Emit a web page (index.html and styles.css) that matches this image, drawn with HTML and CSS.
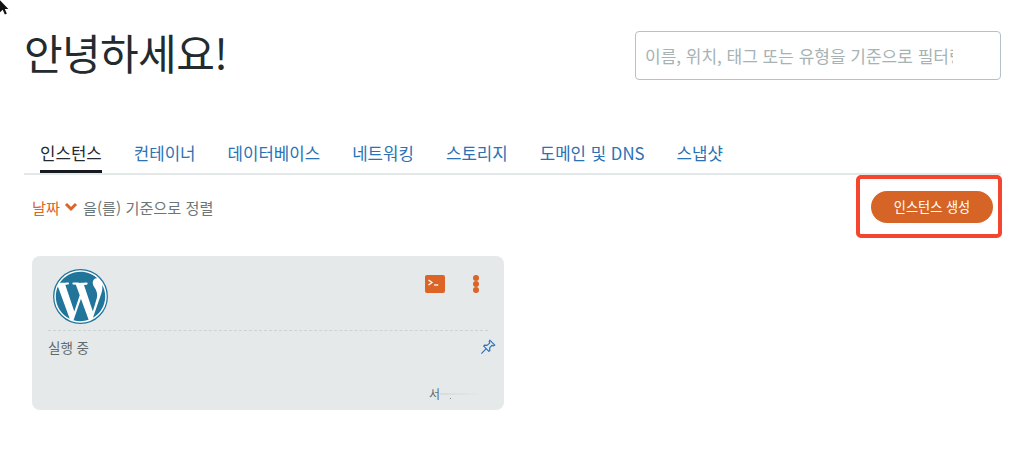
FILE: index.html
```html
<!DOCTYPE html>
<html lang="ko">
<head>
    <meta charset="utf-8">
    <title>안녕하세요!</title>
    <link rel="stylesheet" href="styles.css">
</head>
<body>

    <svg class="cursor" width="11" height="17" viewBox="0 0 10 15">
        <path d="M0 0 L0 11 L2.5 8.6 L4.4 13 L6.2 12.2 L4.4 8 L7.6 8 Z" fill="#111"/>
    </svg>

    <div class="page">
        <div class="top-row">
            <h1>안녕하세요!</h1>
            <input type="text" class="search" placeholder="이름, 위치, 태그 또는 유형을 기준으로 필터링">
        </div>

        <div class="tabs">
            <a class="tab active">인스턴스</a>
            <a class="tab">컨테이너</a>
            <a class="tab">데이터베이스</a>
            <a class="tab">네트워킹</a>
            <a class="tab">스토리지</a>
            <a class="tab">도메인 및 DNS</a>
            <a class="tab">스냅샷</a>
        </div>

        <div class="toolbar">
            <div class="sort">
                <span class="sort-key">날짜</span>
                <svg class="chevron" width="14" height="10" viewBox="0 0 14 10">
                    <path d="M2 2 L7 7 L12 2" fill="none" stroke="#dc6426" stroke-width="3"/>
                </svg>
                <span>을(를) 기준으로 정렬</span>
            </div>
            <div class="highlight">
                <button type="button" class="btn">인스턴스 생성</button>
            </div>
        </div>

        <div class="card">
            <div class="card-top">
                <svg class="wp-logo" width="55" height="55" viewBox="0 0 24 24">
                    <circle cx="12" cy="12" r="11.7" fill="#fff" stroke="#21759b" stroke-width=".55"/>
                    <circle cx="12" cy="12" r="10.75" fill="#fff"/>
                    <path fill="#21759b" d="M21.469 6.825c.84 1.537 1.318 3.3 1.318 5.175 0 3.979-2.156 7.456-5.363 9.325l3.295-9.527c.615-1.54.82-2.771.82-3.864 0-.405-.026-.78-.07-1.11m-7.981.105c.647-.03 1.232-.105 1.232-.105.582-.075.514-.93-.067-.899 0 0-1.755.135-2.88.135-1.064 0-2.85-.15-2.85-.15-.585-.03-.661.855-.075.885 0 0 .54.061 1.125.09l1.68 4.605-2.37 7.08L5.354 6.9c.649-.03 1.234-.1 1.234-.1.585-.075.516-.93-.065-.896 0 0-1.746.138-2.874.138-.2 0-.438-.008-.69-.015C4.911 3.15 8.235 1.215 12 1.215c2.809 0 5.365 1.072 7.286 2.833-.046-.003-.091-.009-.141-.009-1.06 0-1.812.923-1.812 1.914 0 .89.513 1.643 1.06 2.531.411.72.89 1.643.89 2.977 0 .915-.354 1.994-.821 3.479l-1.075 3.585-3.9-11.61.001.014zM12 22.784c-1.059 0-2.081-.153-3.048-.437l3.237-9.406 3.315 9.087c.024.053.05.101.078.149-1.12.393-2.325.609-3.582.609M1.211 12c0-1.564.336-3.05.935-4.39L7.29 21.709C3.694 19.96 1.212 16.271 1.211 12"/>
                </svg>
                <div class="card-actions">
                    <svg class="terminal" width="20" height="18" viewBox="0 0 20 18">
                        <rect width="20" height="18" rx="2" fill="#dc6426"/>
                        <path d="M3.5 5 L7 7.5 L3.5 10" fill="none" stroke="#fff" stroke-width="1.3"/>
                        <path d="M9 10 H13.2" stroke="#fff" stroke-width="1.3"/>
                    </svg>
                    <div class="dots"><i></i><i></i><i></i></div>
                </div>
            </div>
            <div class="card-status">
                <span>실행 중</span>
                <svg class="pin" width="16" height="16" viewBox="0 0 16 16">
                    <path d="M9.8 1.2 L14.8 6.2 L13.6 6.8 L11.9 6.3 L9.6 8.9 L9.9 11.6 L8.9 12.3 L3.7 7.1 L4.5 6.1 L7 6.4 L9.7 4.1 L9.2 2.4 Z M6 9.9 L1.4 14.6" fill="none" stroke="#2e73b8" stroke-width="1.2" stroke-linejoin="round"/>
                </svg>
            </div>
            <div class="card-foot">
                <span class="region">서</span>
                <span class="region-blur"></span>
            </div>
        </div>
    </div>

</body>
</html>
```

FILE: styles.css
```css
body {
    margin: 0;
    background: #fff;
    font-family: "Noto Sans CJK KR", "Noto Sans", sans-serif;
    color: #232b2f;
}

.cursor {
    position: absolute;
    top: 0;
    left: 0;
}

.page {
    padding: 31px 23px 0 24px;
}

.top-row {
    display: flex;
    justify-content: space-between;
    align-items: flex-start;
    height: 107px;
}

h1 {
    margin: 0;
    font-size: 42px;
    font-weight: 400;
    line-height: 42px;
    letter-spacing: -0.6px;
    color: #232b2f;
}

.search {
    box-sizing: border-box;
    width: 366px;
    height: 49px;
    padding: 0 47px 0 9px;
    border: 1px solid #b3c2c2;
    border-radius: 4px;
    font-family: inherit;
    font-size: 17px;
}

.search::placeholder {
    color: #a6b2b4;
    opacity: 1;
}

.tabs {
    display: flex;
    gap: 32px;
    height: 35px;
    padding-left: 16px;
    border-bottom: 2px solid #e3e8e8;
}

.tab {
    height: 35px;
    font-size: 16.8px;
    line-height: 30px;
    color: #2b72b5;
    white-space: nowrap;
}

.tab.active {
    color: #232b2f;
    border-bottom: 3px solid #16191f;
    box-sizing: border-box;
}

.toolbar {
    display: flex;
    justify-content: space-between;
    align-items: center;
    padding-left: 8px;
}

.sort {
    display: flex;
    align-items: center;
    gap: 4.5px;
    font-size: 15.2px;
    color: #6b7678;
}

.sort-key {
    color: #dc6426;
}

.highlight {
    box-sizing: border-box;
    width: 146px;
    height: 63px;
    margin-right: -1px;
    padding-right: 5px;
    border: 4px solid #f4452e;
    border-radius: 5px;
    display: flex;
    align-items: center;
    justify-content: flex-end;
}

.btn {
    width: 122px;
    height: 32px;
    padding: 0;
    border: 0;
    border-radius: 16px;
    background: #d56426;
    color: #fff;
    font-family: inherit;
    font-size: 13.2px;
}

.card {
    box-sizing: border-box;
    width: 472px;
    height: 154px;
    margin: 18px 0 0 8px;
    padding: 13px 16px 0 16px;
    background: #e5e9ea;
    border-radius: 8px;
}

.card-top {
    display: flex;
    justify-content: space-between;
    align-items: flex-start;
    height: 61px;
    padding-left: 5px;
    border-bottom: 1px dashed #ccd3d4;
}

.wp-logo {
    display: block;
}

.card-actions {
    display: flex;
    align-items: flex-start;
    gap: 28px;
    margin: 6px 9px 0 0;
}

.terminal {
    display: block;
}

.dots {
    display: flex;
    flex-direction: column;
}

.dots i {
    display: block;
    width: 6px;
    height: 6px;
    border-radius: 50%;
    background: #dc6426;
}

.card-status {
    display: flex;
    justify-content: space-between;
    align-items: center;
    margin: 6px -8px 0 0;
    font-size: 13.5px;
    color: #5f6b6d;
}

.card-foot {
    position: relative;
    display: flex;
    align-items: center;
    margin: 28px 0 0 381px;
    font-size: 12px;
    color: #5f6b6d;
}

.card-foot::after {
    content: "";
    position: absolute;
    left: 21px;
    top: 13px;
    width: 1px;
    height: 1px;
    background: #7d8789;
}

.region-blur {
    width: 44px;
    height: 2px;
    background: linear-gradient(to right, #d7dcdd, #e5e9ea);
}
```
